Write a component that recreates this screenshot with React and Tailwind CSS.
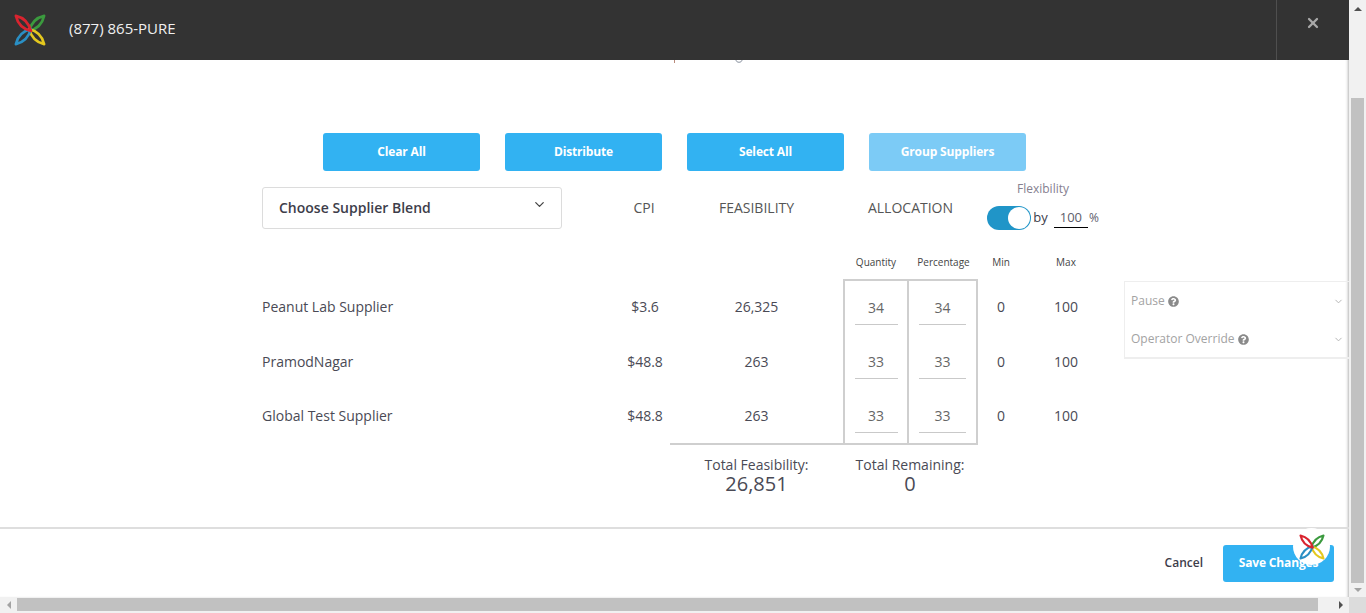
import React from "react";
import { ChevronDown, X } from "lucide-react";
import { FaQuestionCircle } from "react-icons/fa";

const suppliers = [
  { name: "Peanut Lab Supplier", cpi: "$3.6", feasibility: "26,325", qty: 34, pct: 34 },
  { name: "PramodNagar", cpi: "$48.8", feasibility: "263", qty: 33, pct: 33 },
  { name: "Global Test Supplier", cpi: "$48.8", feasibility: "263", qty: 33, pct: 33 },
];

function Logo({ size = 32 }) {
  // four woven petals
  const petal = "M-1 1 C 1 -6 6 -13 15 -15 C 13 -6 7 -1 -1 1 Z";
  return (
    <svg width={size} height={size} viewBox="-17 -17 34 34">
      <g fill="none" strokeWidth="2.8" strokeLinejoin="round">
        <path d={petal} stroke="#3b9a3e" />
        <path d={petal} stroke="#e4c81e" transform="scale(1,-1)" />
        <path d={petal} stroke="#2a8fc4" transform="scale(-1,-1)" />
        <path d={petal} stroke="#d9242f" transform="scale(-1,1)" />
      </g>
    </svg>
  );
}

function ActionButton({ label, light }) {
  return (
    <button className={`w-[157px] h-[38px] rounded-[3px] text-white text-[12px] font-bold tracking-[-0.15px] ${light ? "bg-[#7ccbf6]" : "bg-[#32b2f2]"}`}>
      {label}
    </button>
  );
}

function AmountCell({ value, width, border }) {
  return (
    <div className={`h-full flex items-center justify-center border-[#cfcfcf] ${border}`}>
      <div className={`${width} h-[34px] flex items-center justify-center border-b border-[#c9c9c9] text-[14px] text-[#666]`}>
        {value}
      </div>
    </div>
  );
}

function SideRow({ label }) {
  return (
    <div className="h-[38px] flex items-center justify-between pl-[6px] pr-[5px] text-[12px] text-[#a3a3a3]">
      <span className="flex items-center gap-[3px]">
        {label}
        <FaQuestionCircle className="text-[#8a8a8a] text-[11px]" />
      </span>
      <ChevronDown size={11} className="text-[#b0b0b0]" />
    </div>
  );
}

function Scrollbars({ children }) {
  return (
    <div className="w-[1366px] h-[613px] overflow-hidden flex flex-col bg-white font-['Open_Sans',sans-serif] text-[#3d3d4a]">
      <div className="flex h-[597px]">
        {children}
        <div className="w-[17px] shrink-0 bg-[#f1f1f1] flex flex-col items-center">
          <div className="h-[17px] flex items-center justify-center">
            <div className="w-0 h-0 border-x-[4px] border-x-transparent border-b-[4px] border-b-[#505050]" />
          </div>
          <div className="w-[13px] h-[485px] mt-[81px] bg-[#c1c1c1]" />
          <div className="h-[14px] mt-auto flex items-center justify-center">
            <div className="w-0 h-0 border-x-[4px] border-x-transparent border-t-[4px] border-t-[#a3a3a3]" />
          </div>
        </div>
      </div>
      <div className="h-[16px] flex bg-[#f1f1f1]">
        <div className="w-[17px] flex items-center justify-center">
          <div className="w-0 h-0 border-y-[4px] border-y-transparent border-r-[4px] border-r-[#a3a3a3]" />
        </div>
        <div className="w-[1301px] h-[13px] mt-px bg-[#c1c1c1]" />
        <div className="w-[31px] flex items-center justify-end pr-[6px]">
          <div className="w-0 h-0 border-y-[4px] border-y-transparent border-l-[4px] border-l-[#505050]" />
        </div>
        <div className="w-[17px] bg-[#dcdcdc]" />
      </div>
    </div>
  );
}

export default function App() {
  return (
    <Scrollbars>
      <div className="w-[1349px] flex flex-col shadow-[inset_-3px_0_3px_-2px_rgba(0,0,0,0.3)] relative">
        {/* HEADER */}
        <div className="h-[60px] bg-[#333333] flex items-center shrink-0">
          <div className="w-[69px] pl-[14px]">
            <Logo />
          </div>
          <span className="text-[15px] text-[#f0f0f0] -mt-[4px]">(877) 865-PURE</span>
          <div className="ml-auto w-[73px] h-full border-l border-[#4f4f4f] flex justify-center pt-[15px]">
            <X size={16} strokeWidth={3.4} className="text-[#a9a9a9]" />
          </div>
        </div>

        {/* text scrolled away under the header */}
        <div className="absolute left-[674px] top-[60px] w-px h-[3px] bg-[#b98a7a]" />
        <svg className="absolute left-[735px] top-[60px]" width="8" height="4" viewBox="0 0 8 4">
          <path d="M1 0 C1 3 7 3 7 0" fill="none" stroke="#8a93a0" />
        </svg>

        {/* BODY */}
        <div className="h-[467px] pt-[73px] pl-[262px]">
          <div className="flex gap-[25px] pl-[61px]">
            <ActionButton label="Clear All" />
            <ActionButton label="Distribute" />
            <ActionButton label="Select All" />
            <ActionButton label="Group Suppliers" light />
          </div>

          <div className="flex mt-[16px] h-[49px]">
            <div className="w-[300px] h-[42px] border border-[#dcdcdc] rounded-[3px] flex items-center justify-between pl-[16px] pr-[14px]">
              <span className="text-[14px] font-semibold pb-[2px]">Choose Supplier Blend</span>
              <ChevronDown size={15} className="text-[#444] -mt-[7px]" />
            </div>
            <div className="w-[107px] pl-[57px] pt-[10px] text-center text-[14px] text-[#555]">CPI</div>
            <div className="w-[174px] pl-[1px] pt-[10px] text-center text-[14px] text-[#555]">FEASIBILITY</div>
            <div className="w-[135px] pt-[10px] text-center text-[14px] text-[#555]">ALLOCATION</div>
            <div className="ml-[9px] -mt-[7px] w-[112px]">
              <div className="text-[12px] text-[#85808f] text-center h-[26px]">Flexibility</div>
              <div className="flex items-center">
                <div className="w-[45px] h-[24px] rounded-full bg-[#2095c8] flex justify-end p-px">
                  <div className="w-[22px] h-[22px] rounded-full bg-white" />
                </div>
                <span className="text-[13px] ml-[2px]">by</span>
                <span className="w-[35px] h-[20px] ml-[6px] flex items-center justify-center text-[13px] text-[#5d5d6b] border-b border-black">100</span>
                <span className="text-[12px] ml-px text-[#5d5d6b]">%</span>
              </div>
            </div>
          </div>

          {/* COLUMN LABELS */}
          <div className="grid grid-cols-[408px_173px_66px_69px_46px_84px] text-[10px] text-[#444] h-[43px] pt-[9px] items-center text-center">
            <div className="col-start-3">Quantity</div>
            <div>Percentage</div>
            <div>Min</div>
            <div>Max</div>
          </div>

          {/* SUPPLIERS */}
          <div className="flex">
            <div className="grid grid-cols-[358px_50px_173px_66px_69px_46px_84px] grid-rows-[56px_54px_54px] items-center text-[14px] text-[#4a4a55]">
              {suppliers.map((s, i) => (
                <React.Fragment key={s.name}>
                  <div className="pb-[2px]">{s.name}</div>
                  <div className="pb-[2px] text-center">{s.cpi}</div>
                  <div className="pb-[2px] text-center">{s.feasibility}</div>
                  <AmountCell value={s.qty} width="w-[43px]" border={`border-x-2 ${i === 0 ? "border-t-2" : ""}`} />
                  <AmountCell value={s.pct} width="w-[47px]" border={`border-r-2 ${i === 0 ? "border-t-2" : ""}`} />
                  <div className="pb-[2px] text-center">0</div>
                  <div className="pb-[2px] text-center">100</div>
                </React.Fragment>
              ))}
            </div>
            <div className="w-[225px] ml-[16px] h-[78px] border border-[#eeeeee] border-b-2 border-r-0 mt-[2px]">
              <SideRow label="Pause" />
              <SideRow label="Operator Override" />
            </div>
          </div>

          {/* TOTALS */}
          <div className="ml-[408px] w-[308px] border-t-2 border-[#cfcfcf] flex text-[#4a4a55]">
            <div className="w-[173px] pt-[13px] text-center leading-none">
              <div className="text-[14px]">Total Feasibility:</div>
              <div className="text-[20px] mt-[2px]">26,851</div>
            </div>
            <div className="pt-[13px] w-[134px] text-center leading-none">
              <div className="text-[14px]">Total Remaining:</div>
              <div className="text-[20px] mt-[2px]">0</div>
            </div>
          </div>
        </div>

        {/* FOOTER */}
        <div className="flex-1 border-t-2 border-[#dedede] flex items-center justify-end pr-[15px]">
          <span className="text-[12px] font-semibold mr-[20px]">Cancel</span>
          <button className="w-[111px] h-[37px] rounded-[3px] bg-[#32b2f2] text-white text-[12px] font-bold tracking-[-0.15px]">Save Changes</button>
        </div>

        {/* floating chat badge */}
        <div className="absolute left-[1293px] top-[528px] w-[37px] h-[37px] rounded-full bg-white flex items-center justify-center">
          <Logo size={26} />
        </div>
      </div>
    </Scrollbars>
  );
}
